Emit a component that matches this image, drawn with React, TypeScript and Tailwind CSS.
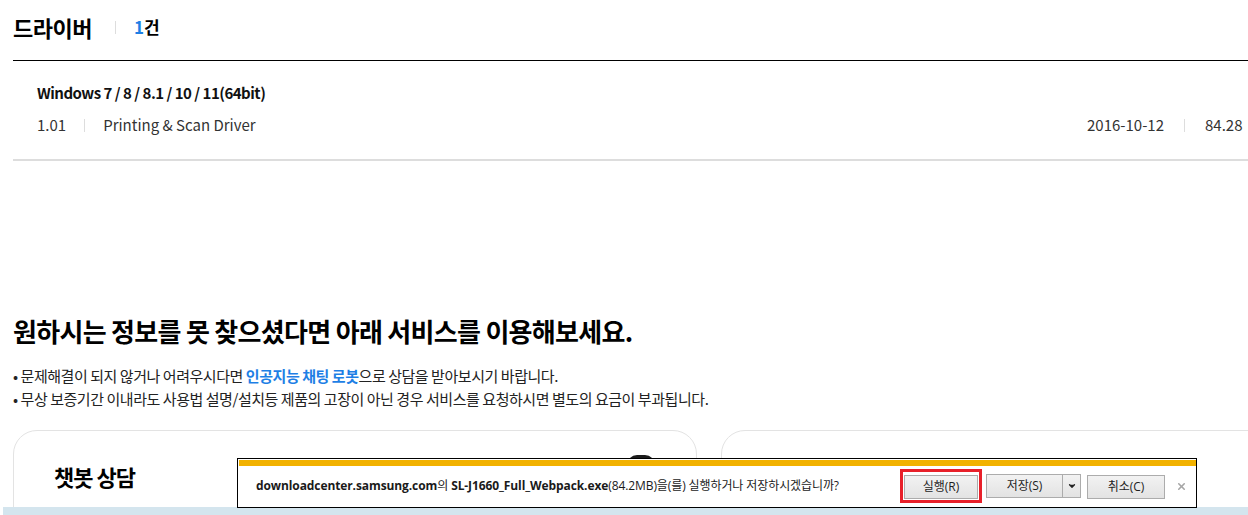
import { ChevronDown, X } from "lucide-react";

const kr = "font-['Noto_Sans_CJK_KR',sans-serif]";

const Sep = () => <span className="mx-[18px] inline-block h-[13px] w-px bg-[#dddddd]" />;

const DialogButton = ({ label, w }: { label: string; w: string }) => (
  <button
    className={`${w} h-[24px] border border-[#acacac] bg-gradient-to-b from-[#f2f2f2] to-[#e3e3e3] text-[12px] text-[#1e1e1e]`}
  >
    {label}
  </button>
);

export default function App() {
  return (
    <div className={`relative h-[515px] w-[1248px] overflow-hidden bg-white ${kr}`}>
      <div className="ml-[13px] w-[1300px]">
        {/* header */}
        <div className="h-[61px] border-b border-black">
          <div className="flex h-[54px] items-center">
            <h2 className="text-[22px] font-bold tracking-[-0.5px] text-black">드라이버</h2>
            <span className="ml-[23px] mr-[18px] h-[13px] w-px bg-[#dddddd]" />
            <span className="text-[17px] font-bold text-black">
              <span className="text-[#1e7fe5]">1</span>건
            </span>
          </div>
        </div>

        {/* driver row */}
        <div className="border-b-2 border-[#dddddd] pb-[23px] pl-[24px] pr-[24px] pt-[21px]">
          <p className="text-[15px] leading-[22px] font-semibold tracking-[-0.5px] text-[#111]">
            Windows 7 / 8 / 8.1 / 10 / 11(64bit)
          </p>
          <div className="mt-[10px] flex items-center text-[15px] leading-[22px] text-[#333]">
            <span>1.01</span>
            <Sep />
            <span>Printing &amp; Scan Driver</span>
            <span className="ml-auto">2016-10-12</span>
            <span className="mx-[20px] inline-block h-[13px] w-px bg-[#dddddd]" />
            <span className="w-[84px]">84.28</span>
          </div>
        </div>

        {/* help */}
        <h3 className="mt-[153px] text-[26px] leading-[34px] font-bold tracking-[-0.7px] text-black">
          원하시는 정보를 못 찾으셨다면 아래 서비스를 이용해보세요.
        </h3>
        <ul className="mt-[16px] text-[15px] leading-[23px] tracking-[-0.45px] text-[#222]">
          <li>
            • 문제해결이 되지 않거나 어려우시다면{" "}
            <span className="font-bold text-[#1e7fe5]">인공지능 채팅 로봇</span>으로 상담을 받아보시기 바랍니다.
          </li>
          <li>• 무상 보증기간 이내라도 사용법 설명/설치등 제품의 고장이 아닌 경우 서비스를 요청하시면 별도의 요금이 부과됩니다.</li>
        </ul>

        {/* cards */}
        <div className="mt-[20px] flex gap-[24px]">
          <div className="h-[200px] w-[684px] shrink-0 rounded-[24px] border border-[#e3e3e3] pl-[40px] pr-[41px] pt-[24px]">
            <div className="flex items-start justify-between">
              <h4 className="mt-[6px] text-[22px] leading-[30px] font-bold tracking-[-1px] text-black">챗봇 상담</h4>
              <div className="h-[40px] w-[28px] rounded-t-[10px] bg-[#1b1b1b]" />
            </div>
          </div>
          <div className="h-[200px] w-[684px] shrink-0 rounded-[24px] border border-[#e3e3e3]" />
        </div>
      </div>

      {/* browser frame strip */}
      <div className="absolute bottom-0 left-[3px] right-0 h-[8px] bg-[#d4e5ee]" />

      {/* download notification bar */}
      <div className="absolute left-[237px] top-[458px] h-[50px] w-[960px] border border-black bg-white pl-px pt-px font-['Open_Sans','Noto_Sans_CJK_KR',sans-serif]">
        <div className="h-[6px] bg-[#f2b200]" />
        <div className="flex h-[40px] items-center pl-[17px]">
          <p className="text-[12px] tracking-[-0.1px] text-[#1a1a1a]">
            <span className="font-bold">downloadcenter.samsung.com</span>의{" "}
            <span className="font-bold">SL-J1660_Full_Webpack.exe</span>(84.2MB)을(를) 실행하거나 저장하시겠습니까?
          </p>
          <div className="ml-auto flex items-center">
            <div className="border-[3px] border-[#e8202a] p-px">
              <DialogButton label="실행(R)" w="w-[74px]" />
            </div>
            <div className="ml-[4px] flex">
              <DialogButton label="저장(S)" w="w-[77px]" />
              <button className="flex h-[24px] w-[18px] items-center justify-center border border-l-0 border-[#acacac] bg-gradient-to-b from-[#f2f2f2] to-[#e3e3e3]">
                <ChevronDown className="h-[10px] w-[10px] fill-[#222] text-[#222]" strokeWidth={3} />
              </button>
            </div>
            <div className="ml-[6px]">
              <DialogButton label="취소(C)" w="w-[78px]" />
            </div>
            <X className="ml-[11px] mr-[9px] h-[11px] w-[11px] text-[#a6a6a6]" strokeWidth={3.5} />
          </div>
        </div>
      </div>
    </div>
  );
}
